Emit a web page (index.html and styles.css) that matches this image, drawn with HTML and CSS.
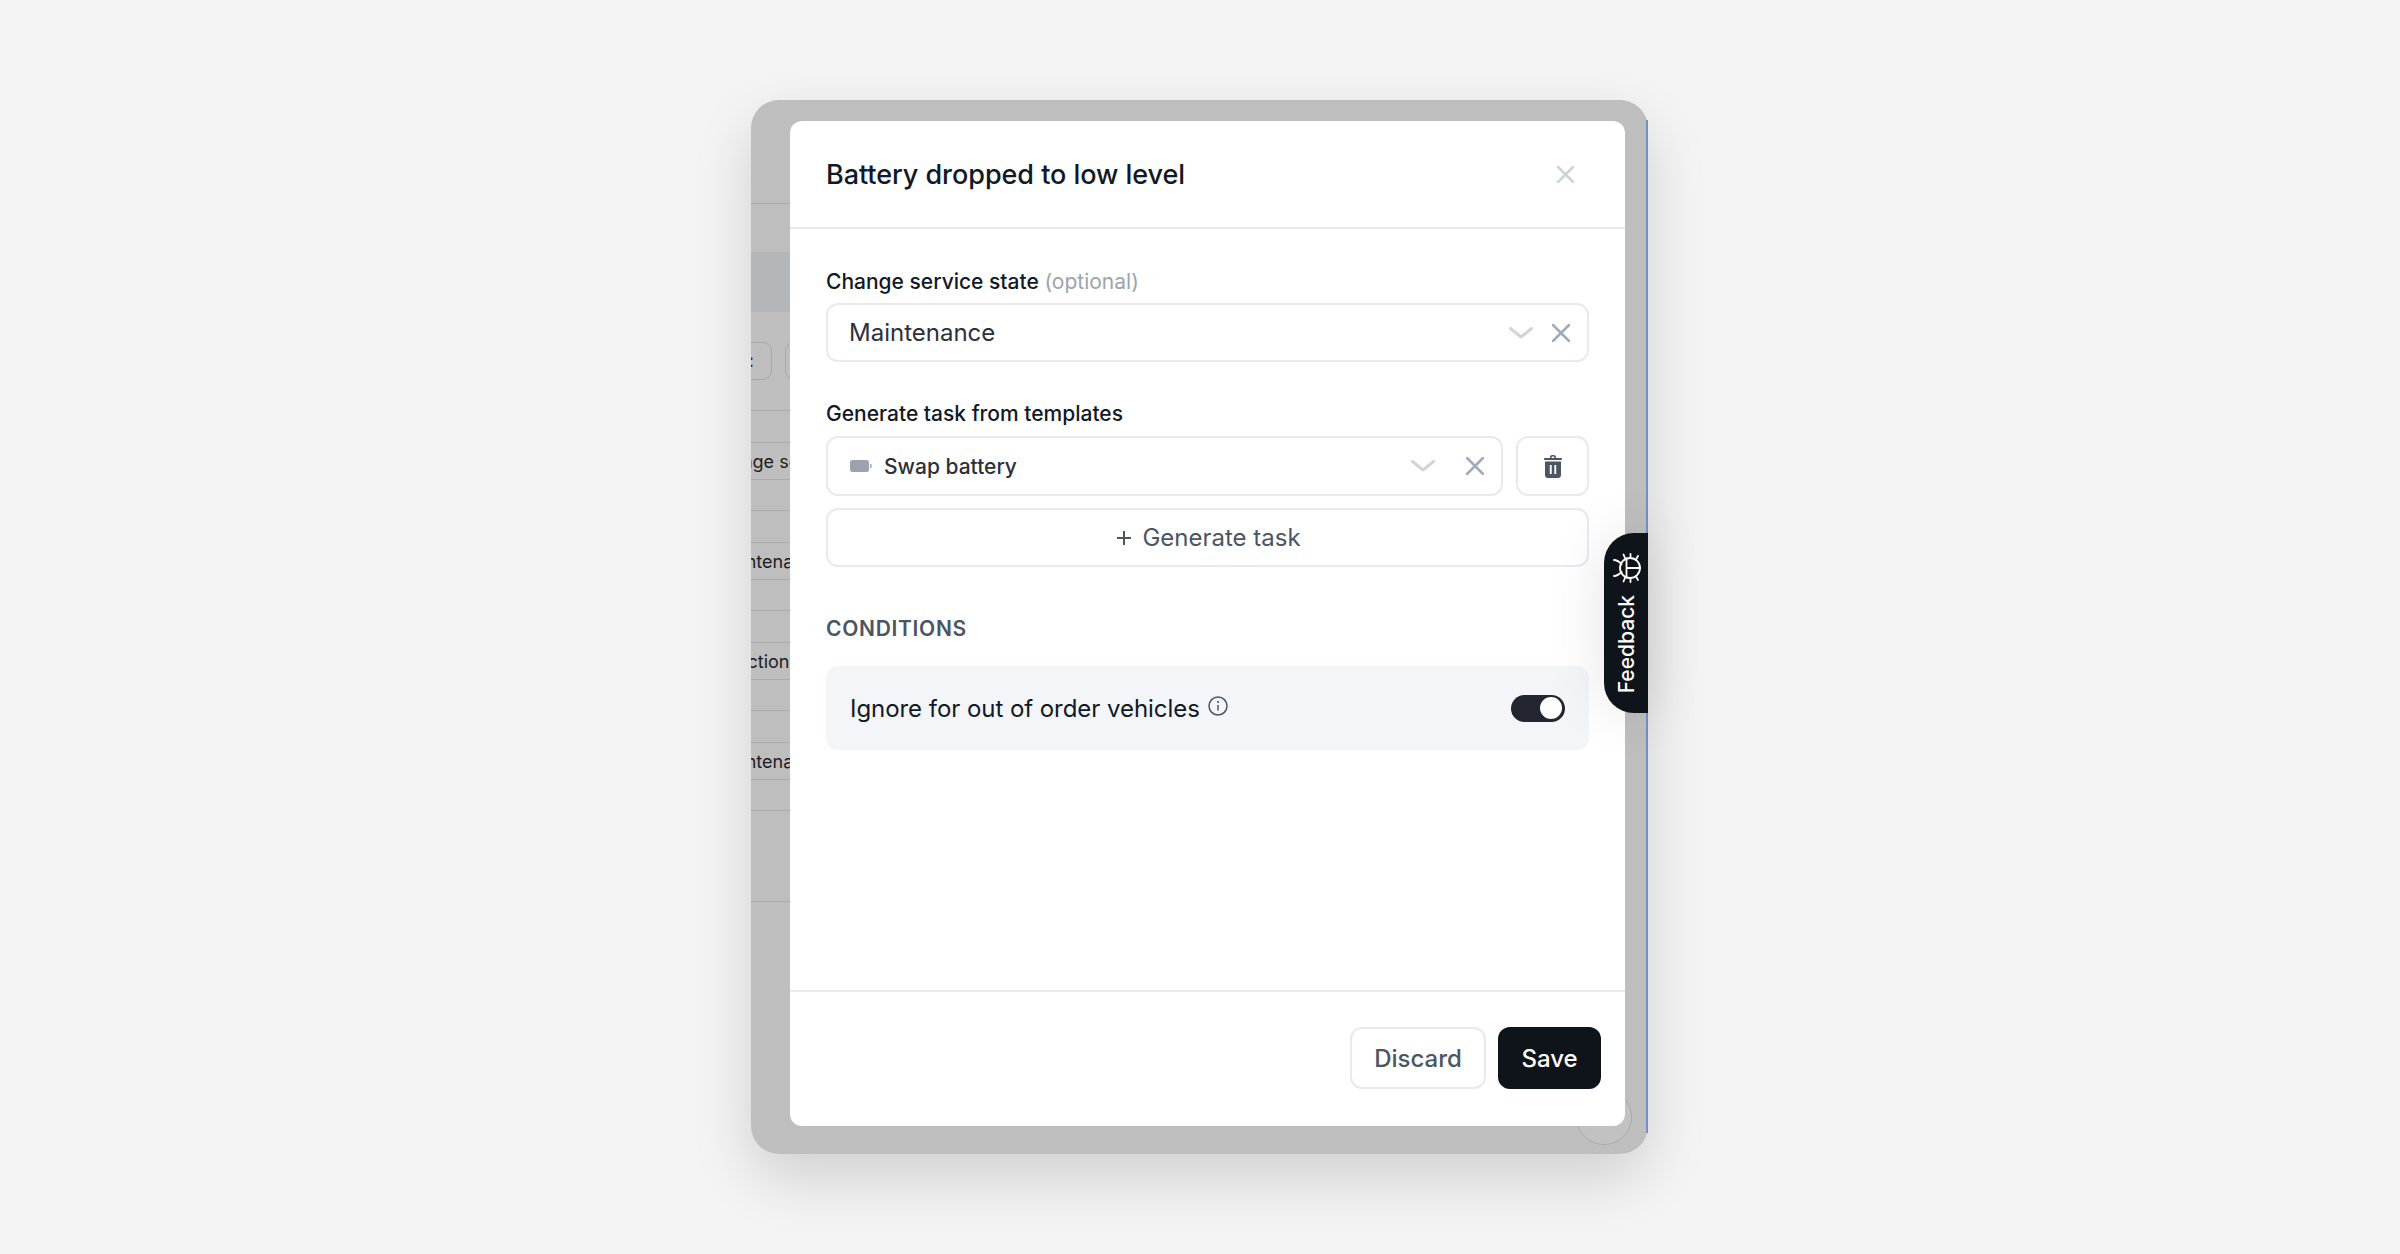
FILE: index.html
```html
<!DOCTYPE html>
<html lang="en">
<head>
  <meta charset="UTF-8">
  <title>Battery dropped to low level</title>
  <link rel="stylesheet" href="styles.css">
</head>
<body>
  <div class="frame">
    <!-- dimmed page behind the modal -->
    <div class="page">
      <div class="page-header"></div>
      <div class="page-band"></div>
      <div class="page-chips">
        <span class="page-chip page-chip-first">:</span>
        <span class="page-chip"></span>
      </div>
      <div class="page-rows">
        <div class="page-row"><div class="page-cell"><span class="cell-text cell-change">Change service</span></div></div>
        <div class="page-row"><div class="page-cell"><span class="cell-text cell-maint">Maintenance</span></div></div>
        <div class="page-row"><div class="page-cell"><span class="cell-text cell-insp">Inspection</span></div></div>
        <div class="page-row"><div class="page-cell"><span class="cell-text cell-maint">Maintenance</span></div></div>
        <div class="page-row page-row-last"></div>
      </div>
    </div>
    <div class="page-edge"></div>
    <div class="page-fab"></div>

    <div class="modal">
      <div class="modal-header">
        <h1 class="modal-title">Battery dropped to low level</h1>
        <svg class="icon-close" width="17" height="17" viewBox="0 0 17 17"><path d="M1 1l15 15M16 1L1 16"/></svg>
      </div>

      <div class="modal-body">
        <label class="field-label">Change service state <span class="field-optional">(optional)</span></label>
        <div class="select">
          <span class="select-value">Maintenance</span>
          <svg class="icon-chevron" width="24" height="12" viewBox="0 0 24 12"><path d="M1.500 1.500L12 10l10.500-8.500"/></svg>
          <svg class="icon-clear" width="18" height="18" viewBox="0 0 18 18"><path d="M1 1l16 16M17 1L1 17"/></svg>
        </div>

        <label class="field-label field-label-second">Generate task from templates</label>
        <div class="template-row">
          <div class="select select-template">
            <svg class="icon-battery" width="22" height="12" viewBox="0 0 22 12"><rect width="19" height="12" rx="2.500"/><rect x="20" y="4" width="1.500" height="4"/></svg>
            <span class="select-value select-value-small">Swap battery</span>
            <svg class="icon-chevron" width="24" height="12" viewBox="0 0 24 12"><path d="M1.500 1.500L12 10l10.500-8.500"/></svg>
            <svg class="icon-clear" width="18" height="18" viewBox="0 0 18 18"><path d="M1 1l16 16M17 1L1 17"/></svg>
          </div>
          <button class="btn-trash">
            <svg width="18" height="23" viewBox="0 0 18 23"><path d="M6 2.200C6 .9 7 0 8.200 0h1.600C11 0 12 .9 12 2.200V3h5c.6 0 1 .4 1 1s-.4 1-1 1H1c-.6 0-1-.4-1-1s.4-1 1-1h5zM7.600 3h2.800v-.7c0-.4-.3-.7-.7-.7H8.300c-.4 0-.7.3-.7.7zM1 6.500h16v13.700c0 1.500-1.200 2.800-2.800 2.800H3.800C2.200 23 1 21.700 1 20.200zM5.800 10v9h1.900v-9zm4.500 0v9h1.900v-9z" fill-rule="evenodd"/></svg>
          </button>
        </div>
        <button class="btn-generate">
          <svg class="icon-plus" width="14" height="14" viewBox="0 0 14 14"><path d="M7 0v14M0 7h14"/></svg>
          Generate task
        </button>

        <h2 class="section-title">CONDITIONS</h2>
        <div class="condition">
          <span class="condition-text">Ignore for out of order vehicles</span>
          <svg class="icon-info" width="20" height="20" viewBox="0 0 20 20"><circle cx="10" cy="10" r="9"/><path d="M10 9v5.500"/><circle class="icon-info-dot" cx="10" cy="6" r="1.100"/></svg>
          <div class="toggle"><span class="toggle-knob"></span></div>
        </div>
      </div>

      <div class="modal-footer">
        <button class="btn btn-discard">Discard</button>
        <button class="btn btn-save">Save</button>
      </div>
    </div>

    <div class="feedback">
      <svg class="icon-bug" width="30" height="30" viewBox="0 0 30 30">
        <circle cx="18" cy="15" r="10"/>
        <path d="M14.500 5.500v19M14.500 15H28"/>
        <path d="M2 7c3 0 5 1.500 7.500 4M2 23c3 0 5-1.500 7.500-4"/>
        <path d="M13 5L11.500 1.500M18.500 4.500V1M24 6.500l2-3.500M13 25L11.500 28.500M18.500 25.500V29M24 23.500l2 3.500"/>
      </svg>
      <span class="feedback-text">Feedback</span>
    </div>
  </div>
</body>
</html>
```

FILE: styles.css
```css
* { margin: 0; padding: 0; box-sizing: border-box; }

html,
body { width: 100%; height: 100%; }

body {
  display: flex;
  justify-content: center;
  align-items: center;
  background-color: #f4f4f4;
  font-family: Inter, "Noto Sans", sans-serif;
  color: #111827;
}

button { font-family: inherit; background: none; cursor: pointer; }

svg { display: block; flex-shrink: 0; }

.frame {
  position: relative;
  width: 897px;
  height: 1054px;
  margin-right: 1px;
  border-radius: 28px;
  background-color: #bebebe;
  box-shadow: 0 24px 60px rgba(0, 0, 0, 0.15);
}

/* page behind the modal */
.page {
  width: 100px;
  height: 100%;
  overflow: hidden;
  border-radius: 28px 0 0 28px;
}
.page-header {
  height: 104px;
  border-bottom: 1px solid #aaa;
}
.page-band {
  height: 60px;
  margin-top: 48px;
  background-color: #b5b6b8;
}
.page-chips {
  display: flex;
  gap: 13px;
  margin: 30px 0 30px -40px;
}
.page-chip {
  display: block;
  width: 61px;
  height: 38px;
  border: 1px solid #a8a8a8;
  border-radius: 9px;
  font-size: 18px;
  line-height: 36px;
  text-align: right;
  padding-right: 17px;
  color: #222;
}
.page-rows { border-top: 1px solid #aaa; }
.page-row {
  height: 100px;
  padding-top: 31px;
  border-bottom: 1px solid #aaa;
}
.page-row-last { height: 91px; }
.page-cell {
  height: 38px;
  border-top: 1px solid #aaa;
  border-bottom: 1px solid #aaa;
  white-space: nowrap;
  font-size: 18px;
  line-height: 38px;
  color: #1d1d1f;
}
.cell-text { display: block; }
.cell-change { margin-left: -43px; }
.cell-maint { margin-left: -36px; }
.cell-insp { margin-left: -50px; }

.page-edge {
  position: absolute;
  top: 20px;
  right: 0;
  bottom: 21px;
  width: 2px;
  background-color: #6f90cf;
}
.page-fab {
  position: absolute;
  right: 16px;
  bottom: 9px;
  width: 56px;
  height: 56px;
  border: 1px solid #a9a9a9;
  border-radius: 50%;
  background-color: #c2c2c2;
}

/* modal */
.modal {
  position: absolute;
  top: 21px;
  left: 39px;
  width: 835px;
  height: 1005px;
  display: flex;
  flex-direction: column;
  border-radius: 12px;
  background-color: #fff;
}
.modal-header {
  display: flex;
  justify-content: space-between;
  align-items: center;
  height: 108px;
  padding: 0 51px 0 36px;
  border-bottom: 2px solid #e8eaef;
}
.modal-title {
  font-size: 27px;
  font-weight: 500;
  letter-spacing: -0.05px;
  color: #111827;
}
.icon-close path {
  fill: none;
  stroke: #ced3da;
  stroke-width: 2.500;
  stroke-linecap: round;
}

.modal-body {
  flex: 1;
  padding: 38px 36px 0;
}
.field-label {
  display: block;
  margin-bottom: 6px;
  font-size: 21px;
  line-height: 30px;
  font-weight: 500;
  color: #111827;
}
.field-label-second {
  margin-top: 37px;
  margin-bottom: 7px;
}
.field-optional {
  font-weight: 400;
  color: #9ca3af;
}

.select {
  display: flex;
  align-items: center;
  height: 59px;
  padding: 0 17px 0 21px;
  border: 2px solid #e8eaef;
  border-radius: 12px;
}
.select-value {
  flex: 1;
  font-size: 24px;
  color: #2b3039;
}
.select-value-small {
  font-size: 21px;
  font-weight: 500;
  margin-left: 12px;
}
.icon-chevron { margin-right: 19px; }
.icon-chevron path {
  fill: none;
  stroke: #d1d5db;
  stroke-width: 3;
  stroke-linecap: round;
  stroke-linejoin: round;
}
.icon-clear path {
  fill: none;
  stroke: #a0abba;
  stroke-width: 2.500;
  stroke-linecap: round;
}
.icon-battery { margin-left: 1px; fill: #9ca3af; }

.template-row {
  display: flex;
  gap: 13px;
}
.select-template { flex: 1; height: 60px; }
.select-template .icon-chevron { margin-right: 31px; }
.btn-trash {
  display: flex;
  justify-content: center;
  align-items: center;
  width: 73px;
  height: 60px;
  border: 2px solid #e8eaef;
  border-radius: 12px;
}
.btn-trash svg { fill: #4b5563; }

.btn-generate {
  display: flex;
  justify-content: center;
  align-items: center;
  gap: 11px;
  width: 100%;
  height: 59px;
  margin-top: 12px;
  padding-left: 3px;
  border: 2px solid #e8eaef;
  border-radius: 12px;
  font-size: 24px;
  color: #4b5563;
}
.icon-plus path {
  fill: none;
  stroke: #4b5563;
  stroke-width: 2;
}

.section-title {
  margin: 47px 0 22px;
  font-size: 21px;
  line-height: 30px;
  font-weight: 600;
  letter-spacing: 0.7px;
  color: #4b5563;
}
.condition {
  display: flex;
  align-items: center;
  height: 84px;
  padding: 0 24px;
  border-radius: 12px;
  background-color: #f3f5f9;
}
.condition-text {
  font-size: 24px;
  letter-spacing: -0.05px;
  color: #111827;
}
.icon-info {
  margin: -5px auto 0 8px;
  fill: none;
  stroke: #4b5563;
  stroke-width: 1.500;
}
.icon-info-dot { fill: #4b5563; stroke: none; }
.toggle {
  display: flex;
  justify-content: flex-end;
  align-items: center;
  width: 54px;
  height: 27px;
  padding: 0 3px;
  border-radius: 14px;
  background-color: #23252f;
}
.toggle-knob {
  width: 22px;
  height: 22px;
  border-radius: 50%;
  background-color: #fff;
}

.modal-footer {
  display: flex;
  justify-content: flex-end;
  gap: 12px;
  height: 136px;
  padding: 35px 24px 0 0;
  border-top: 2px solid #e8eaef;
}
.btn {
  height: 62px;
  border-radius: 12px;
  font-size: 24px;
  font-weight: 500;
}
.btn-discard {
  width: 136px;
  border: 2px solid #e8eaef;
  color: #4b5563;
}
.btn-save {
  width: 103px;
  border: 0;
  background-color: #0f131a;
  color: #fff;
}

/* feedback tab on the page edge */
.feedback {
  position: absolute;
  top: 433px;
  right: 0;
  display: flex;
  flex-direction: column;
  align-items: center;
  gap: 12px;
  width: 44px;
  height: 180px;
  padding: 20px 0 0 2px;
  border-radius: 30px 0 0 30px;
  background-color: #0f131a;
  box-shadow: 0 0 56px rgba(0, 0, 0, 0.12);
}
.icon-bug {
  fill: none;
  stroke: #fff;
  stroke-width: 1.800;
  stroke-linecap: round;
}
.feedback-text {
  writing-mode: vertical-rl;
  transform: rotate(180deg);
  font-size: 21px;
  line-height: 24px;
  font-weight: 500;
  color: #fff;
}
```
